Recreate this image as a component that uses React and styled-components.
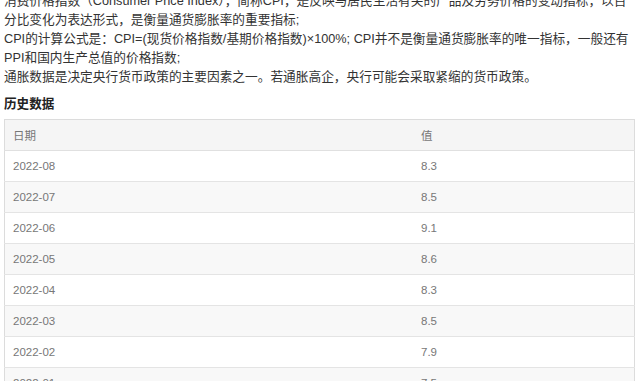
import styled, { createGlobalStyle } from "styled-components";

const GlobalStyle = createGlobalStyle`
  html, body {
    margin: 0;
    padding: 0;
    background: #fff;
    overflow: hidden;
  }
  body {
    font-family: "Liberation Sans", "Noto Sans CJK SC", sans-serif;
  }
`;

const Page = styled.div`
  width: 640px;
  box-sizing: border-box;
  padding: 0 5px 0 4px;
  margin-top: -8px;
`;

const Intro = styled.div`
  font-size: 12.7px;
  line-height: 19px;
  color: #333;
  width: 632px;
  white-space: nowrap;
`;

const Para = styled.p`
  margin: 0;
`;

const Heading = styled.h3`
  margin: 8px 0 0;
  font-size: 12.6px;
  line-height: 18px;
  font-weight: bold;
  color: #222;
`;

const Table = styled.table`
  margin-top: 6px;
  width: 631px;
  border-collapse: collapse;
  border: 1px solid #dcdcdc;
  font-size: 11.5px;
  color: #777;
`;

const HeadCell = styled.th`
  text-align: left;
  font-weight: normal;
  height: 30px;
  padding: 0 0 0 8px;
  background: #f5f5f5;
  border-bottom: 1px solid #e0e0e0;
  width: ${(p) => p.$w || "auto"};
`;

const Row = styled.tr`
  background: ${(p) => (p.$odd ? "#f8f8f8" : "#fff")};
`;

const Cell = styled.td`
  height: 30px;
  padding: 0 0 0 8px;
  border-bottom: 1px solid #e4e4e4;
`;

const rows = [
  ["2022-08", "8.3"],
  ["2022-07", "8.5"],
  ["2022-06", "9.1"],
  ["2022-05", "8.6"],
  ["2022-04", "8.3"],
  ["2022-03", "8.5"],
  ["2022-02", "7.9"],
  ["2022-01", "7.5"],
];

export default function App() {
  return (
    <Page>
      <GlobalStyle />
      <Intro>
        <Para>
          消费价格指数（Consumer Price Index），简称CPI，是反映与居民生活有关的产品及劳务价格的变动指标，以百
          <br />
          分比变化为表达形式，是衡量通货膨胀率的重要指标;
        </Para>
        <Para>
          CPI的计算公式是：CPI=(现货价格指数/基期价格指数)×100%; CPI并不是衡量通货膨胀率的唯一指标，一般还有
          <br />
          PPI和国内生产总值的价格指数;
        </Para>
        <Para>通胀数据是决定央行货币政策的主要因素之一。若通胀高企，央行可能会采取紧缩的货币政策。</Para>
      </Intro>
      <Heading>历史数据</Heading>
      <Table>
        <thead>
          <tr>
            <HeadCell $w="400px">日期</HeadCell>
            <HeadCell>值</HeadCell>
          </tr>
        </thead>
        <tbody>
          {rows.map(([d, v], i) => (
            <Row key={d} $odd={i % 2 === 1}>
              <Cell>{d}</Cell>
              <Cell>{v}</Cell>
            </Row>
          ))}
        </tbody>
      </Table>
    </Page>
  );
}
